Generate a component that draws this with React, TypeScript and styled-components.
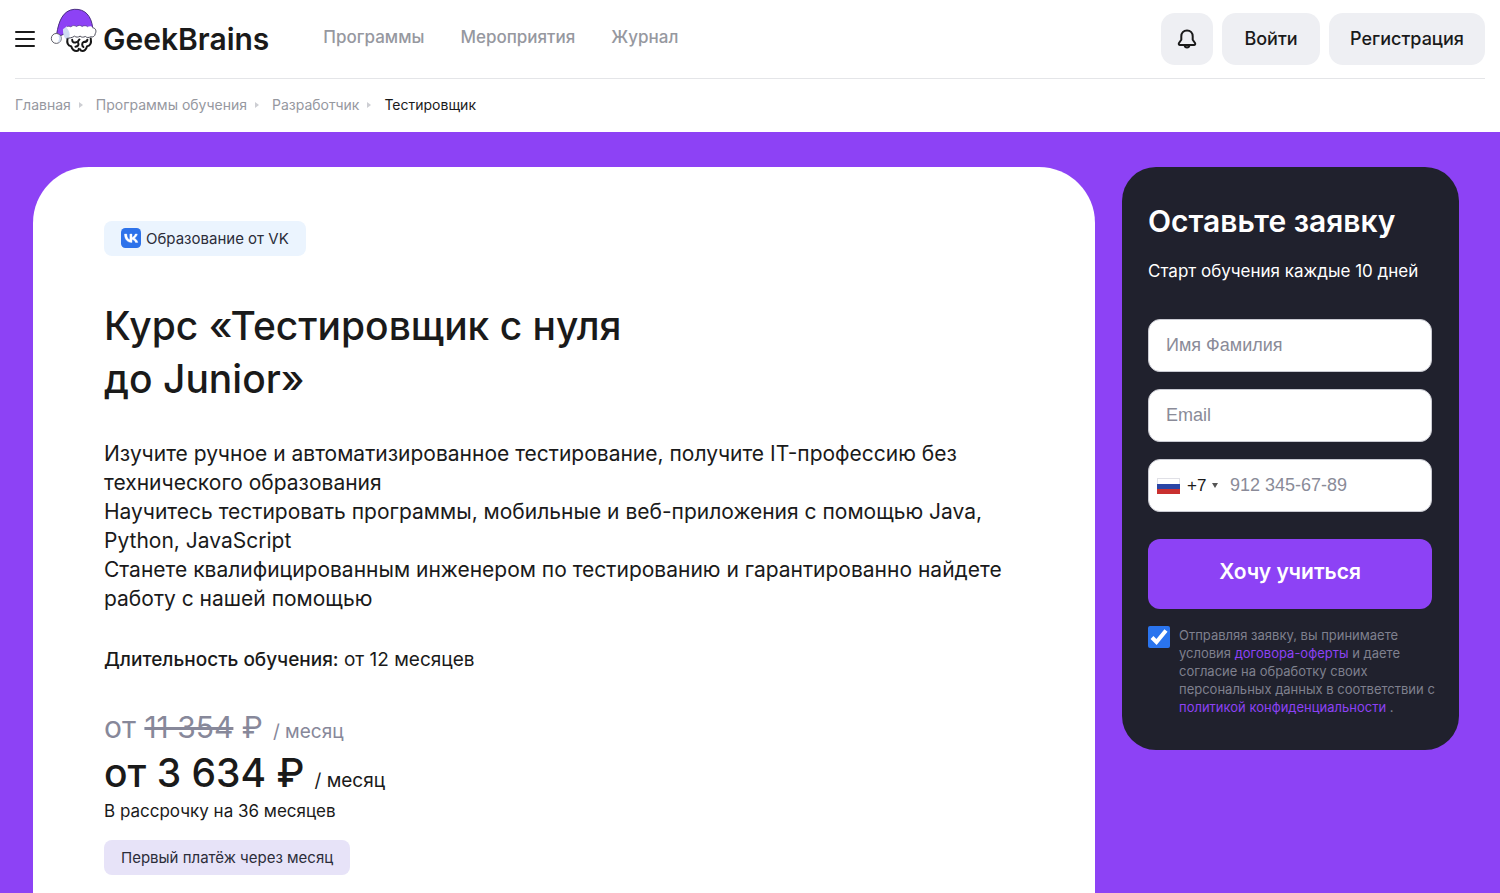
import React from "react";
import styled, { createGlobalStyle } from "styled-components";

const PURPLE = "#8d42f5";
const INK = "#1a1a1a";
const GREY = "#96989f";

const GlobalStyle = createGlobalStyle`
  *, *::before, *::after { box-sizing: border-box; }
  body {
    margin: 0;
    background: #fff;
    color: ${INK};
    font-family: Inter, "Noto Sans", sans-serif;
  }
  a { text-decoration: none; color: inherit; }
  h1, h2, p { margin: 0; }
  button, input, select { font: inherit; }
`;

const Page = styled.div`
  min-height: 100vh;
  display: flex;
  flex-direction: column;
`;

const Header = styled.header`
  margin: 0 15px;
  height: 79px;
  padding-bottom: 1px;
  display: flex;
  align-items: center;
  border-bottom: 1px solid #e4e5e8;
`;

const MenuButton = styled.button`
  width: 20px;
  padding: 0;
  border: 0;
  background: none;
  display: flex;
  flex-direction: column;
  gap: 5px;
  cursor: pointer;
`;

const MenuLine = styled.span`
  height: 2px;
  border-radius: 1px;
  background: ${INK};
`;

const Logo = styled.a`
  margin-left: 15px;
  display: flex;
  align-items: flex-end;
  gap: 6px;
  padding-bottom: 16px;
`;

const LogoText = styled.span`
  font-size: 30px;
  line-height: 28px;
  font-weight: 600;
`;

const Nav = styled.nav`
  margin-left: 54px;
  display: flex;
  gap: 36px;
  padding-bottom: 4px;
  font-size: 17px;
  font-weight: 500;
  color: ${GREY};
`;

const Actions = styled.div`
  margin-left: auto;
  display: flex;
  gap: 9px;
`;

const ActionButton = styled.button<{ $width: number }>`
  width: ${(p) => p.$width}px;
  height: 52px;
  padding: 0;
  border: 0;
  border-radius: 14px;
  background: #eeeff3;
  color: ${INK};
  font-size: 18px;
  font-weight: 500;
  display: flex;
  align-items: center;
  justify-content: center;
  cursor: pointer;
`;

const Crumbs = styled.nav`
  height: 53px;
  padding: 0 15px 2px;
  display: flex;
  align-items: center;
  font-size: 14px;
  color: ${GREY};
`;

const CrumbArrow = styled.span`
  margin: 0 13px 0 8px;
  border: solid transparent;
  border-width: 3px 0 3px 4px;
  border-left-color: #cdced3;
`;

const CrumbCurrent = styled.span`
  color: ${INK};
`;

const Hero = styled.main`
  flex: 1;
  padding: 35px 41px 0 33px;
  display: grid;
  grid-template-columns: minmax(0, 1fr) 337px;
  gap: 27px;
  background: ${PURPLE};
`;

const Course = styled.section`
  padding: 54px 60px 16px 71px;
  border-radius: 56px 56px 0 0;
  background: #fff;
`;

const Badge = styled.div<{ $tone: "blue" | "lilac" }>`
  width: fit-content;
  height: 35px;
  padding: 0 17px 1px;
  display: flex;
  align-items: center;
  gap: 5px;
  border-radius: 8px;
  background: ${(p) => (p.$tone === "blue" ? "#ebf4fe" : "#e7e3f8")};
  color: #2c2d3a;
  font-size: 15px;
`;

const Title = styled.h1`
  margin-top: 43px;
  font-size: 39px;
  line-height: 53px;
  font-weight: 500;
`;

const Lead = styled.p`
  margin-top: 34px;
  font-size: 21px;
  line-height: 29px;
`;

const Duration = styled.p`
  margin-top: 33px;
  font-size: 19px;
  line-height: 28px;
  strong { font-weight: 500; }
`;

const OldPrice = styled.p`
  margin-top: 33px;
  font-size: 30px;
  line-height: 40px;
  color: #87889a;
`;

const NewPrice = styled.p`
  font-size: 39px;
  line-height: 52px;
  font-weight: 500;
`;

const Period = styled.span`
  margin-left: 10px;
  font-size: 19px;
  line-height: 1;
  font-weight: 400;
`;

const Installment = styled.p`
  margin-bottom: 17px;
  font-size: 17px;
  line-height: 24px;
`;

const RequestForm = styled.form`
  align-self: start;
  padding: 33px 27px 34px 26px;
  border-radius: 34px;
  background: #20212d;
  color: #fff;
  display: flex;
  flex-direction: column;
`;

const FormTitle = styled.h2`
  font-size: 30px;
  line-height: 42px;
  font-weight: 600;
`;

const FormNote = styled.p`
  margin: 17px 0 36px;
  font-size: 17px;
  line-height: 24px;
  white-space: nowrap;
`;

const Fields = styled.div`
  display: flex;
  flex-direction: column;
  gap: 17px;
`;

const Field = styled.div<{ $phone?: boolean }>`
  height: 53px;
  padding: ${(p) => (p.$phone ? "0 17px 0 8px" : "0 17px")};
  display: flex;
  align-items: center;
  border: 1px solid #c9cad2;
  border-radius: 12px;
  background: #fff;
`;

const TextInput = styled.input`
  flex: 1;
  min-width: 0;
  padding: 0;
  border: 0;
  outline: 0;
  background: none;
  color: ${INK};
  font-family: "Liberation Sans", sans-serif;
  font-size: 18px;
  &::placeholder { color: #8a8b98; opacity: 1; }
`;

const CodeSelect = styled.select`
  appearance: none;
  margin-left: 7px;
  padding: 0;
  border: 0;
  background: none;
  color: ${INK};
  font-family: "Liberation Sans", sans-serif;
  font-size: 17px;
`;

const Caret = styled.span`
  margin: 0 12px 0 5px;
  border: solid transparent;
  border-width: 5px 3px 0;
  border-top-color: #555;
`;

const Submit = styled.button`
  height: 70px;
  margin-top: 27px;
  padding: 0 0 6px;
  border: 0;
  border-radius: 12px;
  background: ${PURPLE};
  color: #fff;
  font-size: 21px;
  font-weight: 600;
  cursor: pointer;
`;

const Consent = styled.div`
  margin-top: 17px;
  display: flex;
  gap: 9px;
  font-size: 13px;
  line-height: 18px;
  color: #7f808e;
  white-space: nowrap;
`;

const Check = styled.span`
  flex: none;
  width: 22px;
  height: 22px;
  display: grid;
  > * { grid-area: 1 / 1; }
  svg { pointer-events: none; }
`;

const CheckInput = styled.input`
  appearance: none;
  margin: 0;
  width: 22px;
  height: 22px;
  border-radius: 2px;
  background: #fff;
  &:checked { background: #2a74ee; }
`;

const TextLink = styled.a`
  color: ${PURPLE};
`;

const BrainLogo = () => (
  <svg width="47" height="45" viewBox="150 20 140 136" aria-hidden="true">
    <g fill="none" stroke="#161616" strokeWidth="6" strokeLinecap="round">
      <path d="M202 112c-3 14 2 22 11 24 3 9 8 14 16 14 5 0 7-3 7-7" />
      <path d="M272 112c3 14-2 22-11 24-3 9-8 14-14 14-4 0-6-2-7-5" />
      <path d="M216 116c0 8 6 10 13 7M226 137c8-1 11-6 8-12-1-4 1-8 4-10" />
      <path d="M262 116c-1 7-6 7-12 7M250 138c-5-4-5-12 0-15" />
    </g>
    <path
      d="M169 100C175 60 188 27 222 24c33-2 52 20 56 56l-76 14-20 9z"
      fill={PURPLE}
      stroke="#4a2f80"
      strokeWidth="3"
    />
    <path d="M188 84c0 12 2 22 8 29l14-4 10-26-20-8z" fill="#cfdcf2" />
    <path
      d="M198 78c4-4 10-3 14-1 5-5 12-5 17-1 6-5 13-4 17 0 6-4 13-3 17 1 6-3 14-2 15 4 9 0 12 10 8 17-1 9-8 12-14 9-6 3-12 3-16-1-6 3-12 3-16-1-6 4-12 4-17 0-5 4-10 5-16 3 4-10 0-20-9-30z"
      fill="#fff"
    />
    <path
      d="M278 80c9 0 12 10 8 17-1 9-8 12-14 10-6 3-12 3-16-1-6 3-12 3-16-1-6 4-12 4-17 0-6 5-16 6-24 7"
      fill="none"
      stroke="#4b4b58"
      strokeWidth="3"
    />
    <path d="M200 77c4-3 9-2 12 0 5-5 12-5 17-1 6-5 13-4 17 0 6-4 13-3 17 1" fill="none" stroke="#4a2f80" strokeWidth="2" />
    <circle cx="168" cy="112" r="15" fill="#fff" stroke="#5d5d68" strokeWidth="3" />
    <path d="M176 103c4 6 4 13-1 19" fill="none" stroke="#cfdcf2" strokeWidth="5" />
  </svg>
);

const BellIcon = () => (
  <svg width="22" height="22" viewBox="0 0 22 22" fill="none" stroke={INK} strokeWidth="2" strokeLinejoin="round" aria-hidden="true">
    <path d="M11 2.500c-3.600 0-5.700 2.500-5.700 5.800v3.400L3 15c-.6.900-.1 2 1 2h14c1.100 0 1.600-1.100 1-2l-2.300-3.300V8.300c0-3.300-2.100-5.800-5.700-5.800Z" />
    <path d="M8.600 17.200c.2 1.500 1.100 2.300 2.400 2.300s2.200-.8 2.400-2.300" />
  </svg>
);

const VkIcon = () => (
  <svg width="20" height="20" viewBox="0 0 100 100" aria-hidden="true">
    <rect width="100" height="100" rx="22" fill="#2d72ea" />
    <path
      d="M53.700 72.040C30.900 72.040 17.900 56.400 17.400 30.400h11.400c.4 19.100 8.800 27.200 15.500 28.800V30.400H55v16.500c6.600-.7 13.500-8.200 15.800-16.500h10.800c-1.800 10.200-9.300 17.700-14.600 20.800 5.300 2.500 13.900 9 17.100 20.800H72.300C69.700 64.100 63.400 58 55 57.200v14.840z"
      fill="#fff"
      stroke="#fff"
      strokeWidth="2"
    />
  </svg>
);

const Flag = () => (
  <svg width="23" height="16" viewBox="0 0 23 16" aria-hidden="true">
    <rect width="23" height="16" fill="#e0e0e6" />
    <rect x="1" y="1" width="21" height="5" fill="#fff" />
    <rect y="6" width="23" height="5" fill="#2a45a5" />
    <rect y="11" width="23" height="5" fill="#c9302f" />
  </svg>
);

export default function App() {
  return (
    <Page>
      <GlobalStyle />
      <Header>
        <MenuButton type="button" aria-label="Меню">
          <MenuLine />
          <MenuLine />
          <MenuLine />
        </MenuButton>
        <Logo href="#">
          <BrainLogo />
          <LogoText>GeekBrains</LogoText>
        </Logo>
        <Nav>
          <a href="#">Программы</a>
          <a href="#">Мероприятия</a>
          <a href="#">Журнал</a>
        </Nav>
        <Actions>
          <ActionButton type="button" $width={52} aria-label="Уведомления">
            <BellIcon />
          </ActionButton>
          <ActionButton type="button" $width={98}>Войти</ActionButton>
          <ActionButton type="button" $width={156}>Регистрация</ActionButton>
        </Actions>
      </Header>

      <Crumbs aria-label="Навигация">
        <a href="#">Главная</a>
        <CrumbArrow />
        <a href="#">Программы обучения</a>
        <CrumbArrow />
        <a href="#">Разработчик</a>
        <CrumbArrow />
        <CrumbCurrent>Тестировщик</CrumbCurrent>
      </Crumbs>

      <Hero>
        <Course>
          <Badge $tone="blue">
            <VkIcon />
            Образование от VK
          </Badge>
          <Title>
            Курс «Тестировщик с нуля
            <br />
            до Junior»
          </Title>
          <Lead>
            Изучите ручное и автоматизированное тестирование, получите IT-профессию без
            <br />
            технического образования
            <br />
            Научитесь тестировать программы, мобильные и веб-приложения с помощью Java,
            <br />
            Python, JavaScript
            <br />
            Станете квалифицированным инженером по тестированию и гарантированно найдете
            <br />
            работу с нашей помощью
          </Lead>
          <Duration>
            <strong>Длительность обучения:</strong> от 12 месяцев
          </Duration>
          <OldPrice>
            от <s>11 354</s> ₽<Period>/ месяц</Period>
          </OldPrice>
          <NewPrice>
            от 3 634 ₽<Period>/ месяц</Period>
          </NewPrice>
          <Installment>В рассрочку на 36 месяцев</Installment>
          <Badge $tone="lilac">Первый платёж через месяц</Badge>
        </Course>

        <RequestForm>
          <FormTitle>Оставьте заявку</FormTitle>
          <FormNote>Старт обучения каждые 10 дней</FormNote>
          <Fields>
            <Field>
              <TextInput type="text" placeholder="Имя Фамилия" aria-label="Имя Фамилия" />
            </Field>
            <Field>
              <TextInput type="email" placeholder="Email" aria-label="Email" />
            </Field>
            <Field $phone>
              <Flag />
              <CodeSelect aria-label="Код страны">
                <option>+7</option>
              </CodeSelect>
              <Caret />
              <TextInput type="tel" placeholder="912 345-67-89" aria-label="Телефон" />
            </Field>
          </Fields>
          <Submit type="button">Хочу учиться</Submit>
          <Consent>
            <Check>
              <CheckInput id="consent" type="checkbox" defaultChecked />
              <svg width="22" height="22" viewBox="0 0 22 22" fill="none" stroke="#fff" strokeWidth="4" aria-hidden="true">
                <path d="M4 11.500 8.500 16 18 4.500" />
              </svg>
            </Check>
            <label htmlFor="consent">
              Отправляя заявку, вы принимаете
              <br />
              условия <TextLink href="#">договора-оферты</TextLink> и даете
              <br />
              согласие на обработку своих
              <br />
              персональных данных в соответствии с
              <br />
              <TextLink href="#">политикой конфиденциальности</TextLink> .
            </label>
          </Consent>
        </RequestForm>
      </Hero>
    </Page>
  );
}
